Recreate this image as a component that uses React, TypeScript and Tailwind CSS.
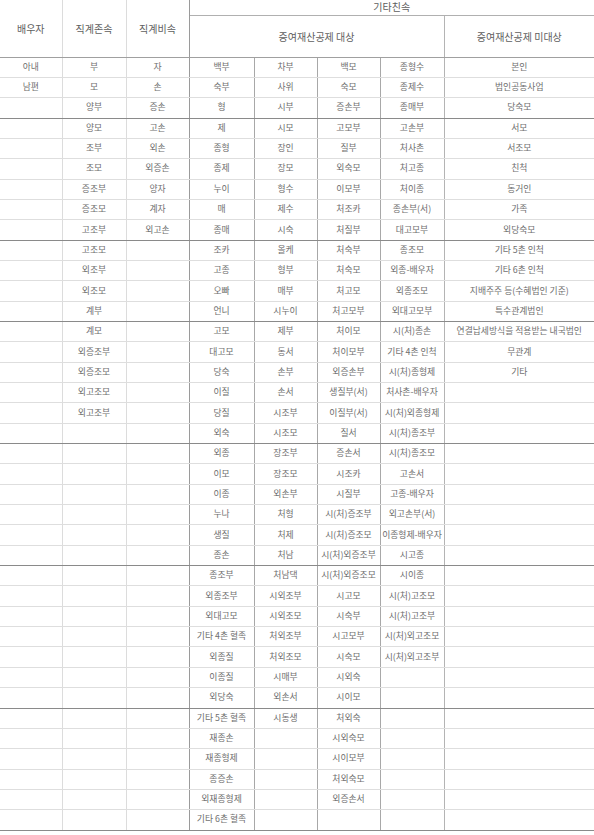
const ROWS: string[][] = [
  ["아내", "부", "자", "백부", "차부", "백모", "종형수", "본인"],
  ["남편", "모", "손", "숙부", "사위", "숙모", "종제수", "법인공동사업"],
  ["", "양부", "증손", "형", "시부", "증손부", "종매부", "당숙모"],
  ["", "양모", "고손", "제", "시모", "고모부", "고손부", "서모"],
  ["", "조부", "외손", "종형", "장인", "질부", "처사촌", "서조모"],
  ["", "조모", "외증손", "종제", "장모", "외숙모", "처고종", "친척"],
  ["", "증조부", "양자", "누이", "형수", "이모부", "처이종", "동거인"],
  ["", "증조모", "계자", "매", "제수", "처조카", "종손부(서)", "가족"],
  ["", "고조부", "외고손", "종매", "시숙", "처질부", "대고모부", "외당숙모"],
  ["", "고조모", "", "조카", "올케", "처숙부", "종조모", "기타 5촌 인척"],
  ["", "외조부", "", "고종", "형부", "처숙모", "외종-배우자", "기타 6촌 인척"],
  ["", "외조모", "", "오빠", "매부", "처고모", "외종조모", "지배주주 등(수혜법인 기준)"],
  ["", "계부", "", "언니", "시누이", "처고모부", "외대고모부", "특수관계법인"],
  ["", "계모", "", "고모", "제부", "처이모", "시(처)종손", "연결납세방식을 적용받는 내국법인"],
  ["", "외증조부", "", "대고모", "동서", "처이모부", "기타 4촌 인척", "무관계"],
  ["", "외증조모", "", "당숙", "손부", "외증손부", "시(처)종형제", "기타"],
  ["", "외고조모", "", "이질", "손서", "생질부(서)", "처사촌-배우자", ""],
  ["", "외고조부", "", "당질", "시조부", "이질부(서)", "시(처)외종형제", ""],
  ["", "", "", "외숙", "시조모", "질서", "시(처)종조부", ""],
  ["", "", "", "외종", "장조부", "증손서", "시(처)종조모", ""],
  ["", "", "", "이모", "장조모", "시조카", "고손서", ""],
  ["", "", "", "이종", "외손부", "시질부", "고종-배우자", ""],
  ["", "", "", "누나", "처형", "시(처)증조부", "외고손부(서)", ""],
  ["", "", "", "생질", "처제", "시(처)증조모", "이종형제-배우자", ""],
  ["", "", "", "종손", "처남", "시(처)외증조부", "시고종", ""],
  ["", "", "", "종조부", "처남댁", "시(처)외증조모", "시이종", ""],
  ["", "", "", "외종조부", "시외조부", "시고모", "시(처)고조모", ""],
  ["", "", "", "외대고모", "시외조모", "시숙부", "시(처)고조부", ""],
  ["", "", "", "기타 4촌 혈족", "처외조부", "시고모부", "시(처)외고조모", ""],
  ["", "", "", "외종질", "처외조모", "시숙모", "시(처)외고조부", ""],
  ["", "", "", "이종질", "시매부", "시외숙", "", ""],
  ["", "", "", "외당숙", "외손서", "시이모", "", ""],
  ["", "", "", "기타 5촌 혈족", "시동생", "처외숙", "", ""],
  ["", "", "", "재종손", "", "시외숙모", "", ""],
  ["", "", "", "재종형제", "", "시이모부", "", ""],
  ["", "", "", "종증손", "", "처외숙모", "", ""],
  ["", "", "", "외재종형제", "", "외증손서", "", ""],
  ["", "", "", "기타 6촌 혈족", "", "", "", ""],
];

// rows after which the separator is drawn darker
const GROUP_END = new Set([3, 9, 13, 19, 25, 32, 38]);

// right border of each column
const COL_RIGHT = [
  "border-r border-r-[#dcdcdc]",
  "border-r border-r-[#dcdcdc]",
  "border-r border-r-[#9a9a9a]",
  "border-r border-r-[#a8a8a8]",
  "border-r border-r-[#a8a8a8]",
  "border-r border-r-[#a8a8a8]",
  "border-r border-r-[#b4b4b4]",
  "",
];

export default function App() {
  return (
    <div className="w-[594px] min-h-[835px] bg-white font-['Noto_Sans_CJK_KR','Noto_Sans',sans-serif]">
      <table className="w-[594px] table-fixed border-collapse text-center">
        <colgroup>
          <col className="w-[62px]" />
          <col className="w-[64px]" />
          <col className="w-[63px]" />
          <col className="w-[65px]" />
          <col className="w-[63px]" />
          <col className="w-[63px]" />
          <col className="w-[64px]" />
          <col className="w-[150px]" />
        </colgroup>
        <thead className="text-[10px] font-normal text-[#5e5e5e]">
          <tr className="h-[15px]">
            <th rowSpan={2} className={`p-0 font-normal border-b border-b-[#a0a0a0] ${COL_RIGHT[0]}`}>배우자</th>
            <th rowSpan={2} className={`p-0 font-normal border-b border-b-[#a0a0a0] ${COL_RIGHT[1]}`}>직계존속</th>
            <th rowSpan={2} className={`p-0 font-normal border-b border-b-[#a0a0a0] ${COL_RIGHT[2]}`}>직계비속</th>
            <th colSpan={5} className="p-0 font-normal leading-none border-b border-b-[#b0b0b0]">기타친속</th>
          </tr>
          <tr className="h-[42px]">
            <th colSpan={4} className="p-0 font-normal border-b border-b-[#a0a0a0] border-r border-r-[#b4b4b4]">
              증여재산공제 대상
            </th>
            <th className="p-0 font-normal border-b border-b-[#a0a0a0]">증여재산공제 미대상</th>
          </tr>
        </thead>
        <tbody className="text-[8.8px] text-[#6e6e6e]">
          {ROWS.map((row, i) => {
            const dark = GROUP_END.has(i + 1);
            return (
              <tr key={i} className="h-[20.35px]">
                {row.map((cell, j) => (
                  <td
                    key={j}
                    className={`p-0 whitespace-nowrap leading-none ${COL_RIGHT[j]} border-b ${
                      dark ? "border-b-[#8a8a8a]" : "border-b-[#dedede]"
                    }`}
                  >
                    {cell}
                  </td>
                ))}
              </tr>
            );
          })}
        </tbody>
      </table>
    </div>
  );
}
